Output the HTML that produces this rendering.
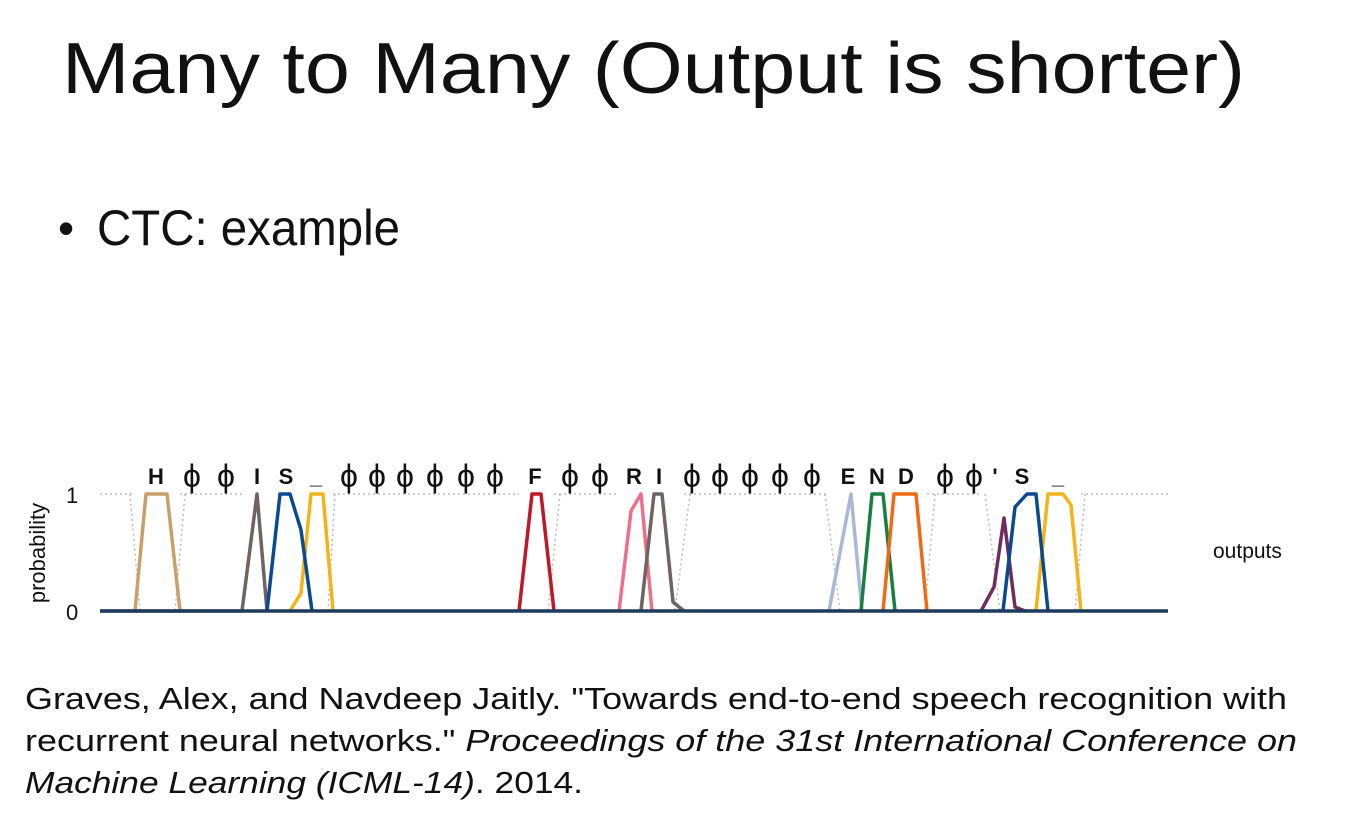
<!DOCTYPE html>
<html><head><meta charset="utf-8"><style>
html,body{margin:0;padding:0;background:#fff;width:1345px;height:820px;overflow:hidden}
svg{display:block}
text{font-family:"Liberation Sans",sans-serif}
</style></head><body>
<svg width="1345" height="820" viewBox="0 0 1345 820" xmlns="http://www.w3.org/2000/svg">
<text x="62" y="93" font-size="72" textLength="1183" lengthAdjust="spacingAndGlyphs" fill="#111">Many to Many (Output is shorter)</text>
<text x="58" y="244" font-size="46" fill="#111">•</text>
<text x="97" y="245" font-size="50" textLength="303" lengthAdjust="spacingAndGlyphs" fill="#111">CTC: example</text>

<g fill="none" stroke="#bbb" stroke-width="1.5" stroke-dasharray="2,3">
<path d="M100 494H135 M180 494H242 M333 494H519 M554 494H619 M684 494H829 M927 494H981 M1081 494H1168"/>
<path d="M130 494L140 611 M185 494L175 611 M335 494L328 611 M560 494L548 611 M690 494L675 611 M825 494L840 611 M935 494L925 611 M985 494L1000 611 M1085 494L1075 611"/>
</g>

<g fill="none" stroke-width="3.5" stroke-linejoin="round">
<path d="M135 611L146 494L167 494L180 611" stroke="#c9a06a"/>
<path d="M100 611L242 611L257 494L267 611" stroke="#6e6460"/>
<path d="M290 611L301 593L311 494L323 494L333 611" stroke="#f2b416"/>
<path d="M519 611L532 494L541 494L554 611" stroke="#c0172a"/>
<path d="M619 611L631 511L641 494L652 611" stroke="#ee6f8a"/>
<path d="M641 611L654 494L662 494L673 602L684 611" stroke="#6e6460"/>
<path d="M829 611L851 494L862 611" stroke="#aab8d8"/>
<path d="M861 611L872 494L883 494L895 611" stroke="#178040"/>
<path d="M883 611L894 494L916 494L927 611" stroke="#f06a14"/>
<path d="M981 611L994 587L1004 518L1015 607L1025 611" stroke="#6e2d5e"/>
<path d="M1036 611L1048 494L1063 494L1071 505L1081 611" stroke="#f2b416"/>
<path d="M267 611L280 494L290 494L301 530L312 611" stroke="#0b4a8e"/>
<path d="M1003 611L1015 507L1027 494L1036 494L1048 611" stroke="#0b4a8e"/>
<path d="M100 611H1168" stroke="#1d3b5e"/>
</g>

<g font-size="22" font-weight="bold" fill="#111" text-anchor="middle">
<text x="156" y="484">H</text><text x="257" y="484">I</text><text x="286" y="484">S</text><text x="316" y="484">_</text>
<text x="535" y="484">F</text><text x="634" y="484">R</text><text x="659" y="484">I</text>
<text x="848" y="484">E</text><text x="877" y="484">N</text><text x="906" y="484">D</text>
<text x="995" y="484">'</text><text x="1022" y="484">S</text><text x="1058" y="484">_</text>
</g>
<g font-size="32" fill="#111" text-anchor="middle" font-family="DejaVu Sans">
<text x="192" y="487">ϕ</text><text x="226" y="487">ϕ</text>
<text x="349" y="487">ϕ</text><text x="377" y="487">ϕ</text><text x="405" y="487">ϕ</text><text x="435" y="487">ϕ</text><text x="466" y="487">ϕ</text><text x="495" y="487">ϕ</text>
<text x="570" y="487">ϕ</text><text x="600" y="487">ϕ</text>
<text x="692" y="487">ϕ</text><text x="720" y="487">ϕ</text><text x="750" y="487">ϕ</text><text x="780" y="487">ϕ</text><text x="812" y="487">ϕ</text>
<text x="945" y="487">ϕ</text><text x="974" y="487">ϕ</text>
</g>
<text x="66" y="503" font-size="22" fill="#111">1</text>
<text x="66" y="620" font-size="22" fill="#111">0</text>
<text transform="translate(45,553) rotate(-90)" font-size="22" fill="#111" text-anchor="middle">probability</text>
<text x="1213" y="558" font-size="21" fill="#111">outputs</text>

<g font-size="31" fill="#111">
<text x="25" y="709" textLength="1262" lengthAdjust="spacingAndGlyphs">Graves, Alex, and Navdeep Jaitly. "Towards end-to-end speech recognition with</text>
<text x="25" y="751" textLength="1272" lengthAdjust="spacingAndGlyphs">recurrent neural networks." <tspan font-style="italic">Proceedings of the 31st International Conference on</tspan></text>
<text x="25" y="793" textLength="558" lengthAdjust="spacingAndGlyphs"><tspan font-style="italic">Machine Learning (ICML-14)</tspan>. 2014.</text>
</g>
</svg>
</body></html>
